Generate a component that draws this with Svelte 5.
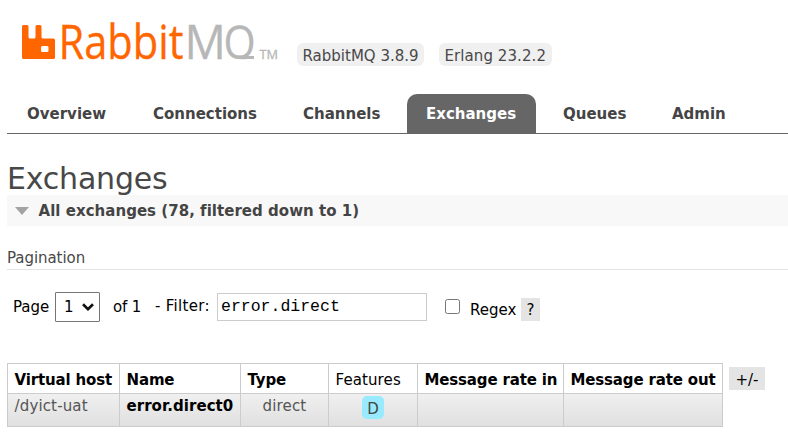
<script>
  const tabs = [
    { label: 'Overview', width: 118 },
    { label: 'Connections', width: 142 },
    { label: 'Channels', width: 115 },
    { label: 'Exchanges', width: 129, selected: true },
    { label: 'Queues', width: 101 },
    { label: 'Admin', width: 92 }
  ];
</script>

<div class="page">
  <header>
    <svg class="logo" width="258" height="40" viewBox="0 0 258 40" role="img" aria-label="RabbitMQ">
      <defs>
        <clipPath id="q-bowl"><rect x="0" y="-40" width="40" height="40.500" /></clipPath>
      </defs>
      <path fill="#f60" fill-rule="evenodd" d="M1.500 1H5Q6.500 1 6.500 2.500V13Q6.500 14.500 8 14.500H12Q13.500 14.500 13.500 13V2.500Q13.500 1 15 1H18Q19.500 1 19.500 2.500V13Q19.500 14.500 21 14.500H31.500Q33 14.500 33 16V33.500Q33 35 31.500 35H1.500Q0 35 0 33.500V2.500Q0 1 1.500 1ZM20.500 22Q19 22 19 23.500V26.500Q19 28 20.500 28H25Q26.500 28 26.500 26.500V23.500Q26.500 22 25 22Z" />
      <text class="word" x="36.500" y="35" fill="#f60" stroke="#f60" textLength="125" lengthAdjust="spacingAndGlyphs">Rabbit</text>
      <text class="word" fill="#b7b7b7" stroke="#b7b7b7" transform="translate(162.500 35) scale(.97 1)">M</text>
      <g transform="translate(201.500 34.700) scale(.87 .98)" clip-path="url(#q-bowl)">
        <text class="word" fill="#b7b7b7" stroke="#b7b7b7">Q</text>
      </g>
      <path fill="#b7b7b7" d="M216 32H232V35H216Z" />
      <text class="tm" x="237.500" y="35" fill="#b7b7b7" textLength="18.500" lengthAdjust="spacingAndGlyphs">TM</text>
    </svg>
    <span class="version v1">RabbitMQ 3.8.9</span>
    <span class="version v2">Erlang 23.2.2</span>
  </header>

  <nav>
    {#each tabs as tab}
      <a class:selected={tab.selected} style:width="{tab.width}px">{tab.label}</a>
    {/each}
  </nav>

  <h1>Exchanges</h1>
  <h2>
    <svg width="14" height="8" viewBox="0 0 14 8"><path fill="#a3a3a3" d="M0 0H14L7 8Z" /></svg>
    <span>All exchanges (78, filtered down to 1)</span>
  </h2>
  <h3>Pagination</h3>

  <div class="filter">
    <span class="pg">Page</span>
    <div class="select">
      <span>1</span>
      <svg width="12" height="8" viewBox="0 0 12 8"><path fill="none" stroke="#111" stroke-width="2.600" d="M1 1.300L6 6.200L11 1.300" /></svg>
    </div>
    <span class="of">of 1</span>
    <span class="fl">- Filter:</span>
    <div class="field">error.direct</div>
    <span class="check"></span>
    <span class="regex">Regex</span>
    <span class="help">?</span>
  </div>

  <div class="listing">
    <table>
      <colgroup>
        <col style:width="112px" /><col style:width="121px" /><col style:width="88px" />
        <col style:width="89px" /><col style:width="146px" /><col style:width="159px" />
      </colgroup>
      <thead>
        <tr>
          <th>Virtual host</th><th>Name</th><th>Type</th><th class="plain">Features</th>
          <th>Message rate in</th><th>Message rate out</th>
        </tr>
      </thead>
      <tbody>
        <tr>
          <td>/dyict-uat</td><td class="name">error.direct0</td><td class="c">direct</td>
          <td class="c"><abbr>D</abbr></td><td></td><td></td>
        </tr>
      </tbody>
    </table>
    <span class="toggle">+/-</span>
  </div>
</div>

<style>
  .page {
    width: 788px;
    height: 440px;
    overflow: hidden;
    box-sizing: border-box;
    padding: 24px 0 0 7px;
    background: #fff;
    color: #484848;
    font: 15px/18px Verdana, "DejaVu Sans", sans-serif;
  }
  header { display: flex; height: 70px; }
  .logo { margin-left: 15px; flex: none; overflow: visible; }
  .word { font: 47.500px "Open Sans", sans-serif; stroke-width: 0.300px; }
  .tm { font: 500 12.500px "Open Sans", sans-serif; stroke: #b7b7b7; stroke-width: 0.300px; }
  .version {
    box-sizing: border-box;
    height: 23px;
    margin-top: 19px;
    padding: 4px 0 0 5.500px;
    border-radius: 6px;
    background: #f0f0f0;
    white-space: nowrap;
  }
  .v1 { width: 127px; margin-left: 17px; }
  .v2 { width: 113px; margin-left: 15px; letter-spacing: 0.080px; }
  nav { display: flex; height: 39px; border-bottom: 1px solid #666; gap: 8px; padding-left: 1px; }
  nav a {
    box-sizing: border-box;
    padding: 11px 0 0 19px;
    border-radius: 10px 10px 0 0;
    font-weight: bold;
    line-height: 18px;
    color: #444;
  }
  nav a.selected { background: #666; color: #fff; }
  h1 {
    height: 35px;
    margin: 26px 0 0;
    font-size: 30px;
    letter-spacing: -0.200px;
    line-height: 37px;
    font-weight: normal;
    color: #484848;
  }
  h2 {
    display: flex;
    align-items: center;
    height: 31px;
    margin: 0;
    padding-left: 8px;
    gap: 9.500px;
    background: #f8f8f8;
    font-size: 15px;
    letter-spacing: 0.030px;
    color: #444;
  }
  h3 {
    height: 20px;
    margin: 23px 0 0;
    border-bottom: 1px solid #e4e4e4;
    font-size: 15px;
    letter-spacing: -0.060px;
    line-height: 18px;
    font-weight: normal;
  }
  .filter {
    display: flex;
    height: 32px;
    margin-top: 21px;
    padding-left: 6px;
    color: #000;
    white-space: nowrap;
  }
  .pg { width: 42px; margin-top: 7px; }
  .select {
    display: flex;
    align-items: center;
    justify-content: space-between;
    box-sizing: border-box;
    width: 45px;
    height: 30px;
    margin-top: 1px;
    padding: 0 5px 0 8px;
    border: 1px solid #767676;
    border-radius: 1px;
  }
  .of { width: 42px; margin: 7px 0 0 13px; letter-spacing: -0.200px; }
  .fl { width: 62px; margin-top: 6px; letter-spacing: 0.300px; }
  .field {
    box-sizing: border-box;
    width: 210px;
    height: 28px;
    margin-top: 2px;
    padding: 4px 3px;
    border: 1px solid #ccc;
    font: 16.500px/18px "Liberation Mono", monospace;
  }
  .check {
    box-sizing: border-box;
    width: 15px;
    height: 15px;
    margin: 8px 0 0 18px;
    border: 1px solid #767676;
    border-radius: 2.500px;
  }
  .regex { width: 51px; margin: 10px 0 0 10px; }
  .help {
    width: 19px;
    height: 23px;
    margin-top: 7px;
    background: #e4e4e4;
    line-height: 24px;
    text-align: center;
  }
  .listing { display: flex; margin-top: 40px; }
  table { width: 716px; table-layout: fixed; border-collapse: collapse; color: #000; }
  th, td {
    box-sizing: border-box;
    padding: 0 0 0 6.500px;
    border: 1px solid #ccc;
    text-align: left;
    white-space: nowrap;
  }
  th { height: 30px; padding-top: 3px; letter-spacing: -0.150px; }
  th.plain { font-weight: normal; letter-spacing: 0.100px; }
  td { height: 33px; padding-top: 3px; vertical-align: top; color: #555; letter-spacing: 0.150px; }
  tbody tr { background: linear-gradient(#f0f0f0, #dfdfdf); }
  td.name { font-weight: bold; color: #000; letter-spacing: 0.050px; }
  td.c { padding-left: 0; text-align: center; }
  abbr {
    display: block;
    width: 22px;
    height: 23px;
    margin: -1px auto 0;
    border-radius: 5px;
    background: #98ebff;
    color: #444;
    line-height: 26px;
  }
  .toggle {
    width: 36px;
    height: 23px;
    margin: 4px 0 0 6px;
    background: #e4e4e4;
    color: #000;
    line-height: 26px;
    text-align: center;
  }
</style>
